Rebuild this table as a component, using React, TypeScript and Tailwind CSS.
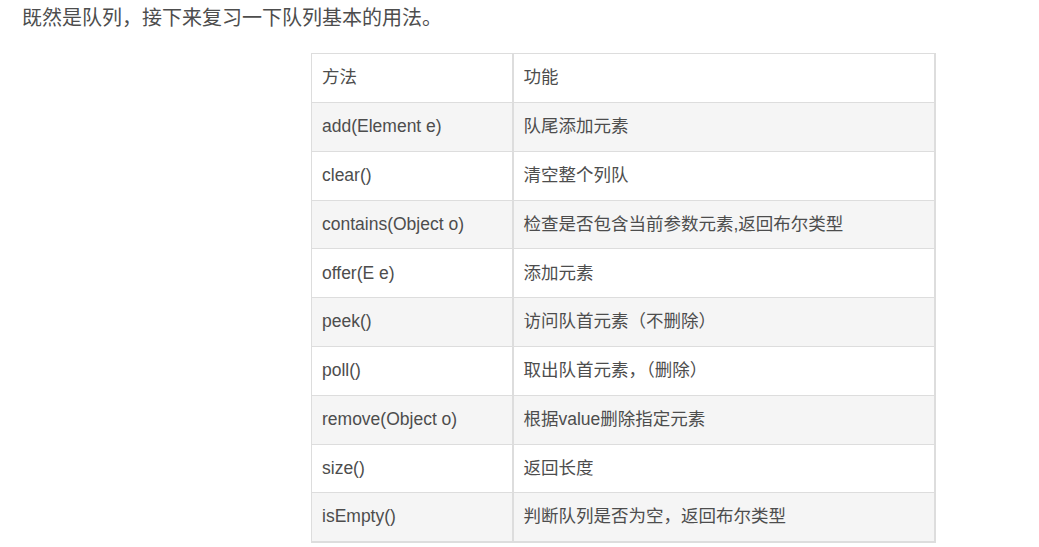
const rows: [string, string][] = [
  ['add(Element e)', '队尾添加元素'],
  ['clear()', '清空整个列队'],
  ['contains(Object o)', '检查是否包含当前参数元素,返回布尔类型'],
  ['offer(E e)', '添加元素'],
  ['peek()', '访问队首元素（不删除）'],
  ['poll()', '取出队首元素，（删除）'],
  ['remove(Object o)', '根据value删除指定元素'],
  ['size()', '返回长度'],
  ['isEmpty()', '判断队列是否为空，返回布尔类型'],
];

export default function App() {
  return (
    <div
      className="w-[1039px] h-[547px] bg-white text-[#4d4d4d] overflow-hidden"
      style={{ fontFamily: '"Liberation Sans", "Noto Sans CJK SC", sans-serif' }}
    >
      <p className="pl-[22px] pt-[6px] text-[20px] leading-[24px]">既然是队列，接下来复习一下队列基本的用法。</p>

      <table className="ml-[311px] mt-[23px] w-[625px] border-collapse border-r-2 border-b-2 border-[#dddddd] text-[17.5px]">
        <colgroup>
          <col className="w-[201px]" />
          <col />
        </colgroup>
        <tbody>
          <tr className="h-[49px] bg-white">
            <td className="border border-[#dddddd] pl-[10px] pb-[1px]">方法</td>
            <td className="border border-[#dddddd] border-l-2 pl-[10px] pb-[1px]">功能</td>
          </tr>
          {rows.map(([method, desc], i) => (
            <tr key={method} className={i % 2 === 0 ? 'h-[48.8px] bg-[#f5f5f5]' : 'h-[48.8px] bg-white'}>
              <td className="border border-[#dddddd] pl-[10px] pb-[1px]">{method}</td>
              <td className="border border-[#dddddd] border-l-2 pl-[10px] pb-[1px]">{desc}</td>
            </tr>
          ))}
        </tbody>
      </table>
    </div>
  );
}
